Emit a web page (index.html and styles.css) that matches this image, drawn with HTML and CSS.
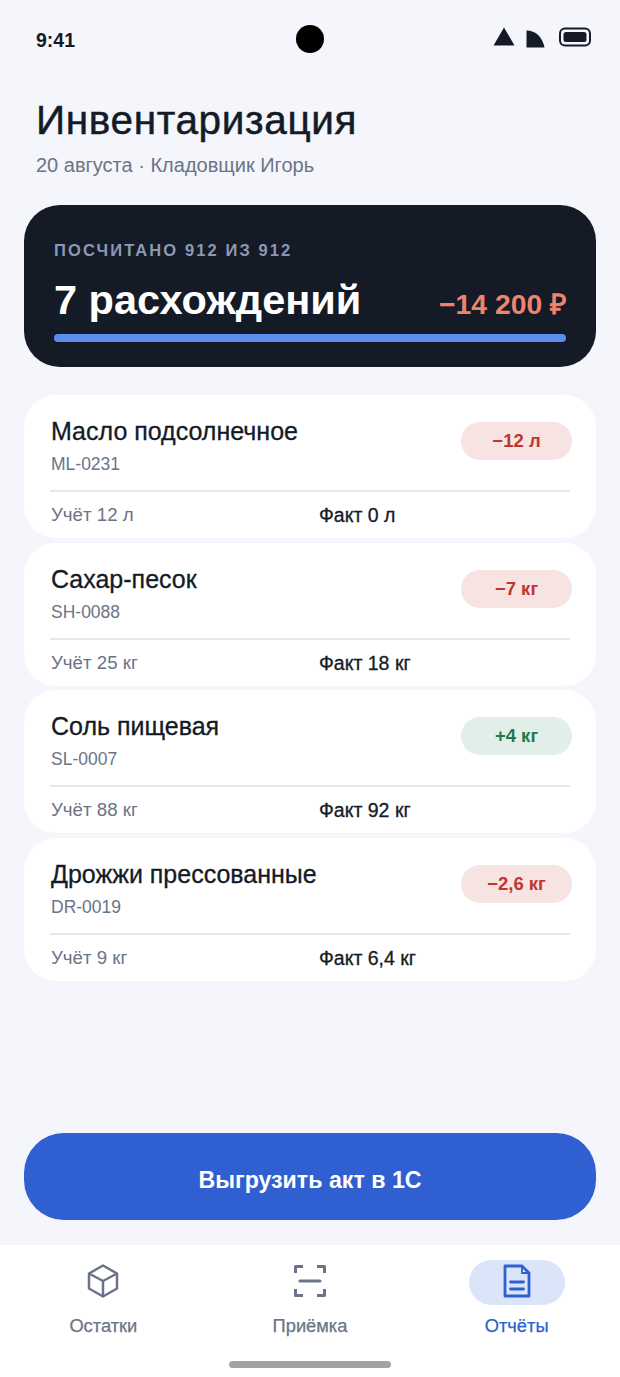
FILE: index.html
```html
<!DOCTYPE html>
<html lang="ru">
<head>
    <meta charset="UTF-8">
    <meta name="viewport" content="width=device-width, initial-scale=1.0">
    <title>Инвентаризация</title>
    <link rel="stylesheet" href="styles.css">
</head>
<body>
    <div class="screen">
        <div class="status-bar">
            <span class="status-time">9:41</span>
            <span class="status-camera"></span>
            <div class="status-icons">
                <svg class="icon-signal" width="22" height="19" viewBox="0 0 22 19"><path d="M11 0.500 L21.500 18.500 H0.500 Z" fill="#141b27"/></svg>
                <svg class="icon-wifi" width="19" height="18" viewBox="0 0 19 18"><path d="M0.500 0.500 C9.500 0.500 16.500 7 18.500 17.500 H0.500 Z" fill="#141b27"/></svg>
                <svg class="icon-battery" width="32" height="20" viewBox="0 0 32 20"><rect x="1" y="1.500" width="30" height="17" rx="5" fill="none" stroke="#141b27" stroke-width="2"/><rect x="4.500" y="5" width="23" height="10" rx="2.500" fill="#141b27"/></svg>
            </div>
        </div>

        <div class="page-header">
            <h1>Инвентаризация</h1>
            <p>20 августа · Кладовщик Игорь</p>
        </div>

        <div class="summary">
            <div class="summary-label">ПОСЧИТАНО 912 ИЗ 912</div>
            <div class="summary-row">
                <span class="summary-title">7 расхождений</span>
                <span class="summary-sum">−14 200 ₽</span>
            </div>
            <div class="summary-bar"></div>
        </div>

        <div class="items">
            <div class="item">
                <div class="item-head">
                    <div>
                        <div class="item-name">Масло подсолнечное</div>
                        <div class="item-code">ML-0231</div>
                    </div>
                    <span class="badge minus">−12 л</span>
                </div>
                <div class="item-foot">
                    <span class="item-book">Учёт 12 л</span>
                    <span class="item-fact">Факт 0 л</span>
                </div>
            </div>
            <div class="item">
                <div class="item-head">
                    <div>
                        <div class="item-name">Сахар-песок</div>
                        <div class="item-code">SH-0088</div>
                    </div>
                    <span class="badge minus">−7 кг</span>
                </div>
                <div class="item-foot">
                    <span class="item-book">Учёт 25 кг</span>
                    <span class="item-fact">Факт 18 кг</span>
                </div>
            </div>
            <div class="item">
                <div class="item-head">
                    <div>
                        <div class="item-name">Соль пищевая</div>
                        <div class="item-code">SL-0007</div>
                    </div>
                    <span class="badge plus">+4 кг</span>
                </div>
                <div class="item-foot">
                    <span class="item-book">Учёт 88 кг</span>
                    <span class="item-fact">Факт 92 кг</span>
                </div>
            </div>
            <div class="item">
                <div class="item-head">
                    <div>
                        <div class="item-name">Дрожжи прессованные</div>
                        <div class="item-code">DR-0019</div>
                    </div>
                    <span class="badge minus">−2,6 кг</span>
                </div>
                <div class="item-foot">
                    <span class="item-book">Учёт 9 кг</span>
                    <span class="item-fact">Факт 6,4 кг</span>
                </div>
            </div>
        </div>

        <div class="action">
            <button class="action-btn">Выгрузить акт в 1С</button>
        </div>

        <div class="nav">
            <div class="nav-tabs">
                <div class="nav-tab">
                    <div class="nav-icon">
                        <svg width="32" height="34" viewBox="0 0 32 34" fill="none" stroke="#6b7486" stroke-width="2.500" stroke-linejoin="round"><path d="M16 1.500 L30 9.500 V24.500 L16 32.500 L2 24.500 V9.500 Z"/><path d="M2 9.500 L16 17 L30 9.500"/><path d="M16 17 V32.500"/></svg>
                    </div>
                    <span>Остатки</span>
                </div>
                <div class="nav-tab">
                    <div class="nav-icon">
                        <svg width="32" height="34" viewBox="0 0 32 34" fill="none" stroke="#6b7486" stroke-width="3" stroke-linejoin="round"><path d="M1.500 9 V2.500 H9"/><path d="M23 2.500 H30.500 V9"/><path d="M1.500 25 V31.500 H9"/><path d="M23 31.500 H30.500 V25"/><path d="M6 17 H26" stroke-linecap="round"/></svg>
                    </div>
                    <span>Приёмка</span>
                </div>
                <div class="nav-tab active">
                    <div class="nav-icon">
                        <svg width="28" height="34" viewBox="0 0 28 34" fill="none" stroke="#2f5fd0" stroke-width="2.800" stroke-linejoin="round"><path d="M2 2 H19 L26 9 V32 H2 Z"/><path d="M19 2 V9 H26" stroke-width="1.800"/><path d="M7.500 18 H20.500" stroke-linecap="round"/><path d="M7.500 25 H20.500" stroke-linecap="round"/></svg>
                    </div>
                    <span>Отчёты</span>
                </div>
            </div>
            <div class="home-bar"></div>
        </div>
    </div>
</body>
</html>
```

FILE: styles.css
```css
:root {
    --bg: #f4f6fb;
    --dark: #141b27;
    --muted: #6b7486;
    --blue: #2f5fd0;
}

* {
    margin: 0;
    padding: 0;
    box-sizing: border-box;
}

body {
    font-family: 'Liberation Sans', Arial, sans-serif;
    background: var(--bg);
    color: var(--dark);
}

.screen {
    width: 620px;
    height: 1377px;
    display: flex;
    flex-direction: column;
}

.status-bar {
    height: 78px;
    padding: 2px 29px 0 36px;
    display: flex;
    align-items: center;
    justify-content: space-between;
    position: relative;
}

.status-time {
    font-size: 19.500px;
    font-weight: 700;
}

.status-camera {
    position: absolute;
    left: 296px;
    top: 25px;
    width: 28px;
    height: 28px;
    border-radius: 50%;
    background: #000;
}

.status-icons {
    display: flex;
    align-items: flex-start;
    margin-top: -6px;
}

.status-icons svg {
    display: block;
}

.icon-wifi {
    margin: 3px 14px 0 11px;
}

.page-header {
    padding: 18px 36px 0;
}

.page-header h1 {
    font-size: 40.500px;
    font-weight: 400;
    line-height: 48px;
    letter-spacing: 0.650px;
    -webkit-text-stroke: 0.5px var(--dark);
}

.page-header p {
    margin-top: 8px;
    font-size: 20px;
    line-height: 26px;
    color: var(--muted);
}

.summary {
    margin: 27px 24px 0;
    height: 162px;
    padding: 33px 30px 0;
    background: var(--dark);
    border-radius: 36px;
}

.summary-label {
    font-size: 16.500px;
    font-weight: 700;
    line-height: 24px;
    letter-spacing: 2.100px;
    color: #8c99b3;
}

.summary-row {
    margin-top: 13px;
    display: flex;
    align-items: baseline;
    justify-content: space-between;
}

.summary-title {
    font-size: 41.500px;
    font-weight: 700;
    line-height: 50px;
    color: #fff;
}

.summary-sum {
    font-size: 28.300px;
    font-weight: 700;
    color: #f0836c;
}

.summary-bar {
    margin-top: 9px;
    height: 8px;
    border-radius: 4px;
    background: #5b8def;
}

.items {
    margin: 28px 24px 0;
    display: flex;
    flex-direction: column;
    gap: 4.500px;
}

.item {
    height: 143px;
    padding: 0 26px;
    background: #fff;
    border-radius: 32px;
}

.item-head {
    height: 95px;
    padding: 22px 0 0 1px;
    margin-right: -2px;
    display: flex;
    justify-content: space-between;
    align-items: flex-start;
}

.item-name {
    font-size: 25px;
    font-weight: 400;
    line-height: 28px;
    -webkit-text-stroke: 0.3px var(--dark);
}

.item-code {
    margin-top: 7px;
    font-size: 17.500px;
    line-height: 24px;
    color: var(--muted);
}

.badge {
    width: 111px;
    height: 38px;
    margin-top: 5px;
    border-radius: 19px;
    display: flex;
    align-items: center;
    justify-content: center;
    font-size: 18.500px;
    font-weight: 700;
}

.badge.minus {
    background: #f7e3e1;
    color: #c0352f;
}

.badge.plus {
    background: #e2efe8;
    color: #1f7a4d;
}

.item-foot {
    border-top: 2px solid #e4e7ef;
    padding: 10px 0 0 1px;
    display: grid;
    grid-template-columns: 268px 1fr;
    font-size: 18.700px;
    line-height: 26px;
}

.item-book {
    color: var(--muted);
}

.item-fact {
    font-size: 19.500px;
    -webkit-text-stroke: 0.3px var(--dark);
}

.action {
    margin-top: auto;
    padding: 0 24px 25px;
}

.action-btn {
    display: block;
    width: 100%;
    height: 87px;
    padding-top: 8px;
    border: none;
    border-radius: 40px;
    background: var(--blue);
    color: #fff;
    font-family: inherit;
    font-size: 23.200px;
    font-weight: 700;
}

.nav {
    height: 132px;
    background: #fff;
    padding-top: 15px;
}

.nav-tabs {
    display: grid;
    grid-template-columns: repeat(3, 1fr);
}

.nav-tab {
    display: flex;
    flex-direction: column;
    align-items: center;
    font-size: 18.300px;
    line-height: 24px;
    color: var(--muted);
    -webkit-text-stroke: 0.25px currentColor;
}

.nav-icon {
    width: 96px;
    height: 45px;
    margin-bottom: 9px;
    padding-bottom: 4px;
    border-radius: 23px;
    display: flex;
    align-items: center;
    justify-content: center;
}

.nav-tab.active {
    color: var(--blue);
}

.nav-tab.active .nav-icon {
    background: #dbe5f9;
}

.home-bar {
    width: 162px;
    height: 7px;
    margin: 23px auto 0;
    border-radius: 4px;
    background: #a3a3a3;
}
```
